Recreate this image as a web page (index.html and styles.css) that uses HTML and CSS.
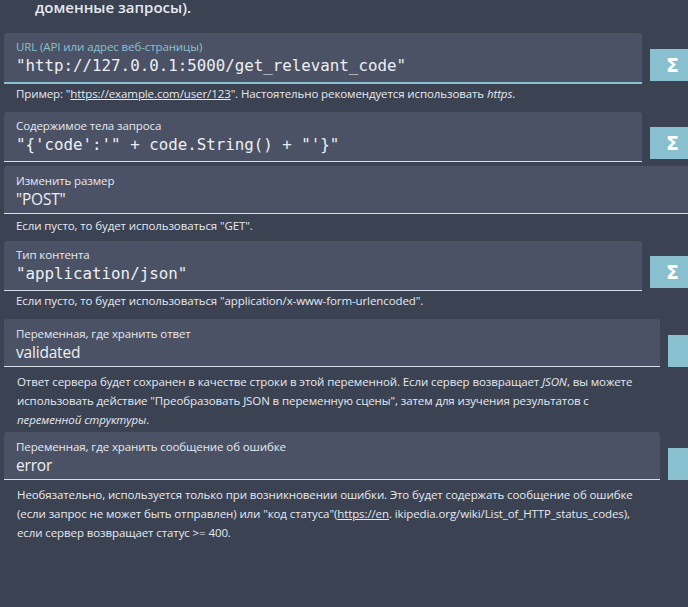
FILE: index.html
```html
<!DOCTYPE html>
<html lang="ru">
<head>
<meta charset="utf-8">
<title>Запрос</title>
<link rel="stylesheet" href="styles.css">
</head>
<body>
<div class="page">
  <p class="intro">доменные запросы).</p>

  <div class="row row--sigma">
    <div class="field field--active">
      <div class="label">URL (API или адрес веб-страницы)</div>
      <div class="value mono">"http://127.0.0.1:5000/get_relevant_code"</div>
    </div>
    <button class="btn">Σ</button>
  </div>
  <p class="help">Пример: "<a class="link">https://example.com/user/123</a>". Настоятельно рекомендуется использовать <em>https</em>.</p>

  <div class="row row--sigma">
    <div class="field">
      <div class="label">Содержимое тела запроса</div>
      <div class="value mono">"{'code':'" + code.String() + "'}"</div>
    </div>
    <button class="btn">Σ</button>
  </div>

  <div class="row row--wide row--joined">
    <div class="field field--sans">
      <div class="label">Изменить размер</div>
      <div class="value">"POST"</div>
    </div>
  </div>
  <p class="help help--loose">Если пусто, то будет использоваться "GET".</p>

  <div class="row row--sigma">
    <div class="field">
      <div class="label">Тип контента</div>
      <div class="value mono">"application/json"</div>
    </div>
    <button class="btn">Σ</button>
  </div>
  <p class="help">Если пусто, то будет использоваться "application/x-www-form-urlencoded".</p>

  <div class="row row--var">
    <div class="field field--sans">
      <div class="label">Переменная, где хранить ответ</div>
      <div class="value">validated</div>
    </div>
    <button class="btn btn--var"></button>
  </div>
  <p class="help help--var">Ответ сервера будет сохранен в качестве строки в этой переменной. Если сервер возвращает <em>JSON</em>, вы можете<br>использовать действие "Преобразовать JSON в переменную сцены", затем для изучения результатов с<br><em>переменной структуры</em>.</p>

  <div class="row row--var">
    <div class="field field--sans">
      <div class="label">Переменная, где хранить сообщение об ошибке</div>
      <div class="value">error</div>
    </div>
    <button class="btn btn--var"></button>
  </div>
  <p class="help help--var">Необязательно, используется только при возникновении ошибки. Это будет содержать сообщение об ошибке<br>(если запрос не может быть отправлен) или "код статуса"(<a class="link">https://en</a>. ikipedia.org/wiki/List_of_HTTP_status_codes),<br>если сервер возвращает статус &gt;= 400.</p>
</div>
</body>
</html>
```

FILE: styles.css
```css
html, body {
  margin: 0;
  padding: 0;
  background: #3b4252;
  overflow: hidden;
}

body {
  width: 688px;
  height: 607px;
  font-family: "Open Sans", "Noto Sans", sans-serif;
  color: #e5e9f0;
}

.page {
  width: 760px;
  padding-left: 4px;
  box-sizing: border-box;
}

.intro {
  margin: -1px 0 0 31px;
  height: 34px;
  font-size: 15px;
  line-height: 16px;
  font-weight: 600;
  color: #e5e9f0;
}

.row {
  display: flex;
  align-items: flex-end;
  gap: 8px;
}

.row--sigma .field {
  width: 638px;
}

.row--wide .field {
  width: 740px;
}

.row--var .field {
  width: 656px;
}

.row--joined {
  margin-top: 4px;
}

.field {
  flex: none;
  box-sizing: border-box;
  background: #4c5265;
  border-radius: 3px 3px 0 0;
  border-bottom: 1px solid #d8dee9;
  padding: 6px 12px 5px;
}

.field--active {
  border-bottom: 2px solid #88c0d0;
}

.field--active .label {
  color: #88c0d0;
}

.field--sans {
  padding: 7px 12px 4px;
}

.label {
  font-size: 11.5px;
  letter-spacing: -0.1px;
  line-height: 16px;
  color: #e5e9f0;
}

.value {
  font-size: 15.5px;
  letter-spacing: -0.2px;
  line-height: 20px;
  color: #eceff4;
  white-space: nowrap;
}

.value.mono {
  font-family: "DejaVu Sans Mono", "Liberation Mono", monospace;
  font-size: 15.8px;
  letter-spacing: 0;
  line-height: 22px;
}

.btn {
  flex: none;
  width: 45px;
  height: 32px;
  margin-bottom: 3px;
  border: 0;
  padding: 0;
  background: #88c0d0;
  color: #ffffff;
  font-family: "DejaVu Sans", sans-serif;
  font-size: 19px;
  font-weight: 700;
  line-height: 32px;
}

.btn--var {
  margin-bottom: 0;
}

.help {
  margin: 0 0 9px;
  padding-left: 12px;
  font-size: 11.5px;
  letter-spacing: -0.1px;
  line-height: 19px;
  color: #e5e9f0;
}

.help--loose {
  margin: 2px 0 6px;
}

.help--var {
  margin: 5px 0 3px;
  padding-left: 13px;
}

.help em {
  font-style: italic;
}

.link {
  color: inherit;
  text-decoration: underline;
}
```
